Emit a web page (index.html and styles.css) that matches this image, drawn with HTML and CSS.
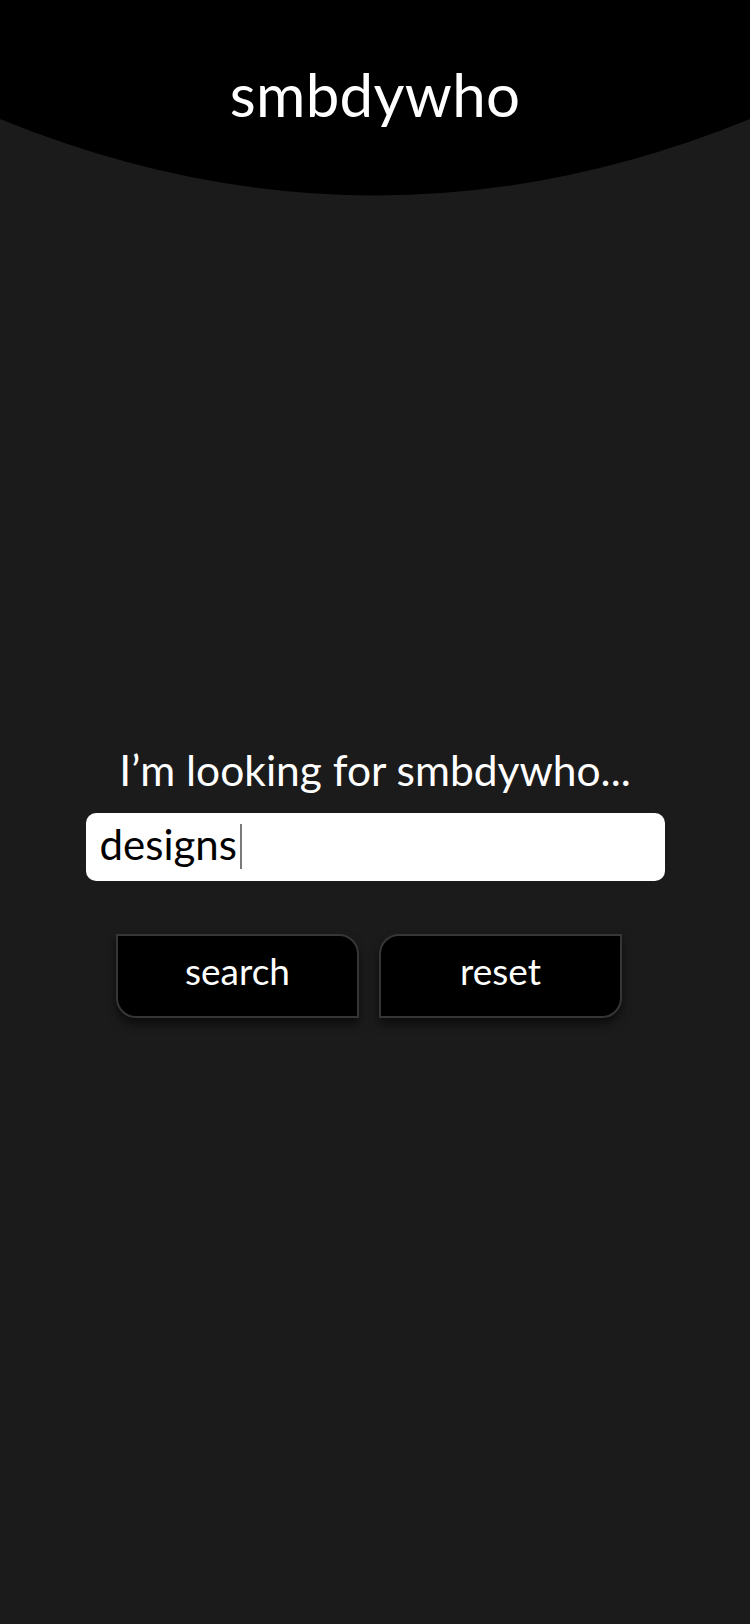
FILE: index.html
```html
<!DOCTYPE html>
<html lang="en">
<head>
<meta charset="utf-8">
<title>smbdywho</title>
<link rel="stylesheet" href="styles.css">
</head>
<body>
<header class="hero">
  <h1 class="logo">smbdywho</h1>
</header>
<main class="finder">
  <p class="prompt">I’m looking for smbdywho...</p>
  <div class="field"><span class="field-value">designs</span><span class="caret"></span></div>
  <div class="actions">
    <button class="btn btn-search" type="button">search</button>
    <button class="btn btn-reset" type="button">reset</button>
  </div>
</main>
</body>
</html>
```
FILE: styles.css
```css
* { box-sizing: border-box; }
html, body {
  margin: 0;
  padding: 0;
  background: #1b1b1b;
  font-family: Lato, "Open Sans", sans-serif;
  color: #fff;
}
body { min-height: 1624px; overflow-x: hidden; }

.hero {
  height: 196px;
  background: #000;
  padding-top: 58px;
  clip-path: path("M0,0 H750 V119 Q375,272 0,119 Z");
}
.logo {
  margin: 0;
  text-align: center;
  font-size: 60px;
  font-weight: 400;
  line-height: 1.2;
  letter-spacing: 0.3px;
}

.finder {
  padding-top: 548px;
  display: flex;
  flex-direction: column;
  align-items: center;
}
.prompt {
  margin: 0 0 18px;
  font-size: 42.5px;
  line-height: 1.2;
  text-align: center;
}
.field {
  width: 579px;
  height: 68px;
  background: #fff;
  border-radius: 10px;
  padding: 0 0 6px 14px;
  display: flex;
  align-items: center;
  color: #000;
  font-size: 42px;
  line-height: 62px;
}
.field-value { display: block; }
.caret {
  display: block;
  width: 2px;
  height: 45px;
  margin-left: 3px;
  margin-top: 4px;
  background: #7a7a7a;
}
.actions {
  margin-top: 53px;
  display: flex;
  gap: 20px;
  padding-right: 12px;
}
.btn {
  width: 243px;
  height: 84px;
  background: #000;
  color: #fff;
  border: 2px solid #363636;
  font-family: Lato, "Open Sans", sans-serif;
  font-size: 37px;
  line-height: 1.2;
  padding: 0 0 10px;
  display: flex;
  align-items: center;
  justify-content: center;
  box-shadow: 0 6px 10px rgba(0, 0, 0, 0.55);
}
.btn-search { border-radius: 0 20px 0 20px; }
.btn-reset { border-radius: 20px 0 20px 0; }
```
